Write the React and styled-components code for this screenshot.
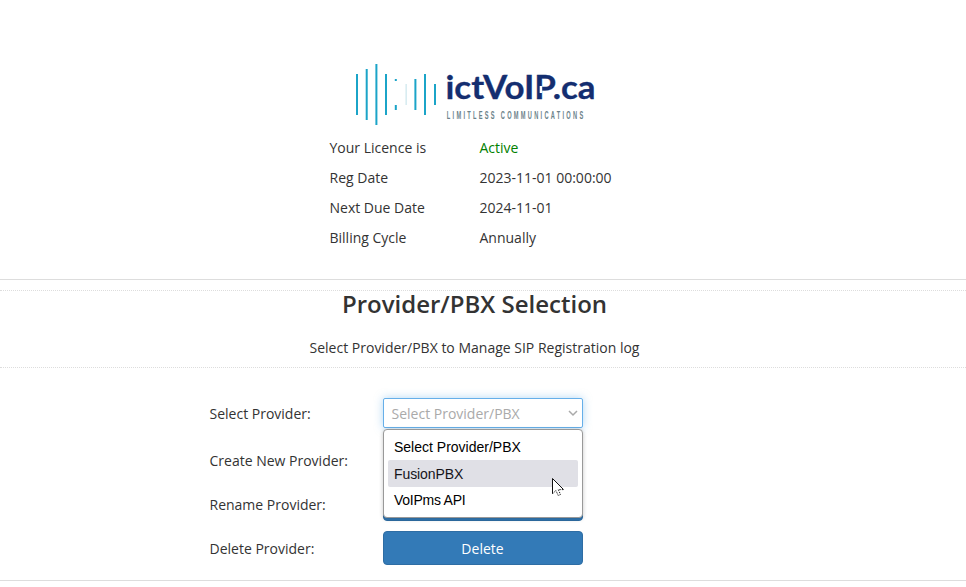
import React from 'react';
import styled, { createGlobalStyle } from 'styled-components';

const GlobalStyle = createGlobalStyle`
  * { box-sizing: border-box; }
  html, body { margin: 0; background: #fff; overflow: hidden; }
  body { font: 14px/20px "Open Sans", "Noto Sans", sans-serif; color: #333; }
`;

const Page = styled.main`
  height: 587px;
  overflow: hidden;
`;

const LicencePanel = styled.section`
  height: 280px;
  padding: 60px 0 0 329.5px;
  border-bottom: 1px solid #ddd;
`;

const Logo = styled.svg`
  display: block;
  width: 250px;
  height: 68px;
  margin-left: 20.5px;
`;

const Wordmark = styled.text`
  font: 700 32.5px Lato, sans-serif;
  fill: #142e70;
  stroke: #142e70;
  stroke-width: 0.3px;
`;

const Tagline = styled.text`
  font: 700 10.3px "Liberation Sans", sans-serif;
  fill: #6b828a;
`;

const Details = styled.dl`
  display: grid;
  grid-template-columns: 150px 200px;
  grid-auto-rows: 30px;
  align-items: center;
  margin: 5px 0 0;
`;

const Term = styled.dt``;

const Value = styled.dd`
  margin: 0;
  color: ${(p) => (p.$active ? '#008000' : 'inherit')};
`;

const Intro = styled.header`
  height: 78px;
  margin-top: 10px;
  padding-right: 17px;
  border-top: 1px dotted #ddd;
  border-bottom: 1px dotted #ddd;
  text-align: center;
`;

const Title = styled.h1`
  margin: 0;
  font-size: 24px;
  line-height: 26px;
  font-weight: 600;
`;

const Subtitle = styled.p`
  margin: 21px 0 0;
`;

const Form = styled.form`
  display: grid;
  grid-template-columns: 173.5px 200px;
  grid-template-rows: 35px 34px 34px 34px;
  row-gap: 10px;
  align-items: center;
  align-content: start;
  height: 213px;
  padding: 30px 0 0 209.5px;
  border-bottom: 1px solid #ddd;
`;

const Label = styled.label`
  align-self: ${(p) => (p.$first ? 'start' : 'center')};
  padding-top: ${(p) => (p.$first ? 6 : 1)}px;
`;

const SelectWrap = styled.div`
  position: relative;
  align-self: start;
`;

const SelectBox = styled.div`
  display: flex;
  align-items: center;
  justify-content: space-between;
  height: 30px;
  padding: 1px 4px 0 7.5px;
  border: 1px solid #66afe9;
  border-radius: 2px;
  background: #fff;
  color: #aaa;
  box-shadow: 0 0 8px rgba(102, 175, 233, 0.5);
`;

const Chevron = styled.svg`
  width: 10px;
  height: 8px;
  margin-top: -2px;
`;

const Menu = styled.ul`
  position: absolute;
  z-index: 1;
  top: 31px;
  left: 0;
  width: 200px;
  height: 89px;
  margin: 0;
  padding: 4px;
  list-style: none;
  border: 1px solid #999;
  border-radius: 4px;
  background: #fff;
  box-shadow: 0 1px 4px rgba(0, 0, 0, 0.22);
`;

const Option = styled.li`
  height: ${(p) => (p.$hovered ? 27 : 26)}px;
  padding-left: 6px;
  border-radius: 2px;
  background: ${(p) => (p.$hovered ? '#e0e0e6' : 'transparent')};
  color: ${(p) => (p.$hovered ? '#15141a' : '#000')};
  font: 14px/${(p) => (p.$hovered ? 28 : 26)}px "Liberation Sans", Arial, sans-serif;
  letter-spacing: ${(p) => p.$tracking}px;
`;

const Cursor = styled.svg`
  position: absolute;
  z-index: 2;
  left: 169px;
  top: 80px;
  width: 12px;
  height: 19px;
`;

const Button = styled.button`
  height: 34px;
  padding: 2px 1px 0 0;
  border: 1px solid #2e6da4;
  border-radius: 4px;
  background: #337ab7;
  color: #fff;
  font: inherit;
`;

const bars = [
  [7, 14, 41], [16.7, 9, 51], [26.4, 4, 61], [36, 14, 41], [45.8, 19, 2],
  [45.8, 45, 5], [65.4, 19, 31], [75, 14, 41], [85, 24, 21],
];

const details = [
  ['Your Licence is', 'Active'],
  ['Reg Date', '2023-11-01 00:00:00'],
  ['Next Due Date', '2024-11-01'],
  ['Billing Cycle', 'Annually'],
];

const options = [
  { name: 'Select Provider/PBX', tracking: 0 },
  { name: 'FusionPBX', tracking: -0.1 },
  { name: 'VoIPms API', tracking: -0.25 },
];

export default function App() {
  return (
    <Page>
      <GlobalStyle />
      <LicencePanel>
        <Logo viewBox="0 0 250 68">
          {bars.map(([x, y, h]) => (
            <rect key={`${x}-${y}`} x={x - 1} y={y} width="2" height={h} fill="#1ba4c8" />
          ))}
          <rect x="55.5" y="24" width="1.3" height="21" fill="#cfe8ee" />
          <Wordmark x="95.5" y="38.7" textLength="150" lengthAdjust="spacingAndGlyphs">ictVoIP.ca</Wordmark>
          <rect x="189.7" y="26" width="2.5" height="7" fill="#fff" />
          <Tagline transform="translate(96.8 59) scale(0.55 1)" textLength="248" lengthAdjust="spacing">LIMITLESS COMMUNICATIONS</Tagline>
        </Logo>
        <Details>
          {details.map(([term, value]) => (
            <React.Fragment key={term}>
              <Term>{term}</Term>
              <Value $active={value === 'Active'}>{value}</Value>
            </React.Fragment>
          ))}
        </Details>
      </LicencePanel>
      <Intro>
        <Title>Provider/PBX Selection</Title>
        <Subtitle>Select Provider/PBX to Manage SIP Registration log</Subtitle>
      </Intro>
      <Form>
        <Label $first>Select Provider:</Label>
        <SelectWrap>
          <SelectBox>
            Select Provider/PBX
            <Chevron viewBox="0 0 10 8" fill="none" stroke="#aaa" strokeWidth="1.5">
              <path d="M1 2l4 4 4-4" />
            </Chevron>
          </SelectBox>
          <Menu>
            {options.map(({ name, tracking }) => (
              <Option key={name} $hovered={name === 'FusionPBX'} $tracking={tracking}>{name}</Option>
            ))}
          </Menu>
          <Cursor viewBox="0 0 12 19">
            <path d="M.5.5v15.3l3.4-3.3 2.3 5 2.3-1-2.2-4.9h5z" fill="#fff" />
            <path d="M.5 15.8V.5l11 11" fill="none" stroke="#111" />
            <path d="M11.3 11.6h-5l2.2 4.9-2.3 1-2.3-5L.5 15.8" fill="none" stroke="#222" strokeDasharray="1.5 1" />
          </Cursor>
        </SelectWrap>
        <Label>Create New Provider:</Label>
        <Button type="button" />
        <Label>Rename Provider:</Label>
        <Button type="button" />
        <Label>Delete Provider:</Label>
        <Button type="button">Delete</Button>
      </Form>
    </Page>
  );
}
